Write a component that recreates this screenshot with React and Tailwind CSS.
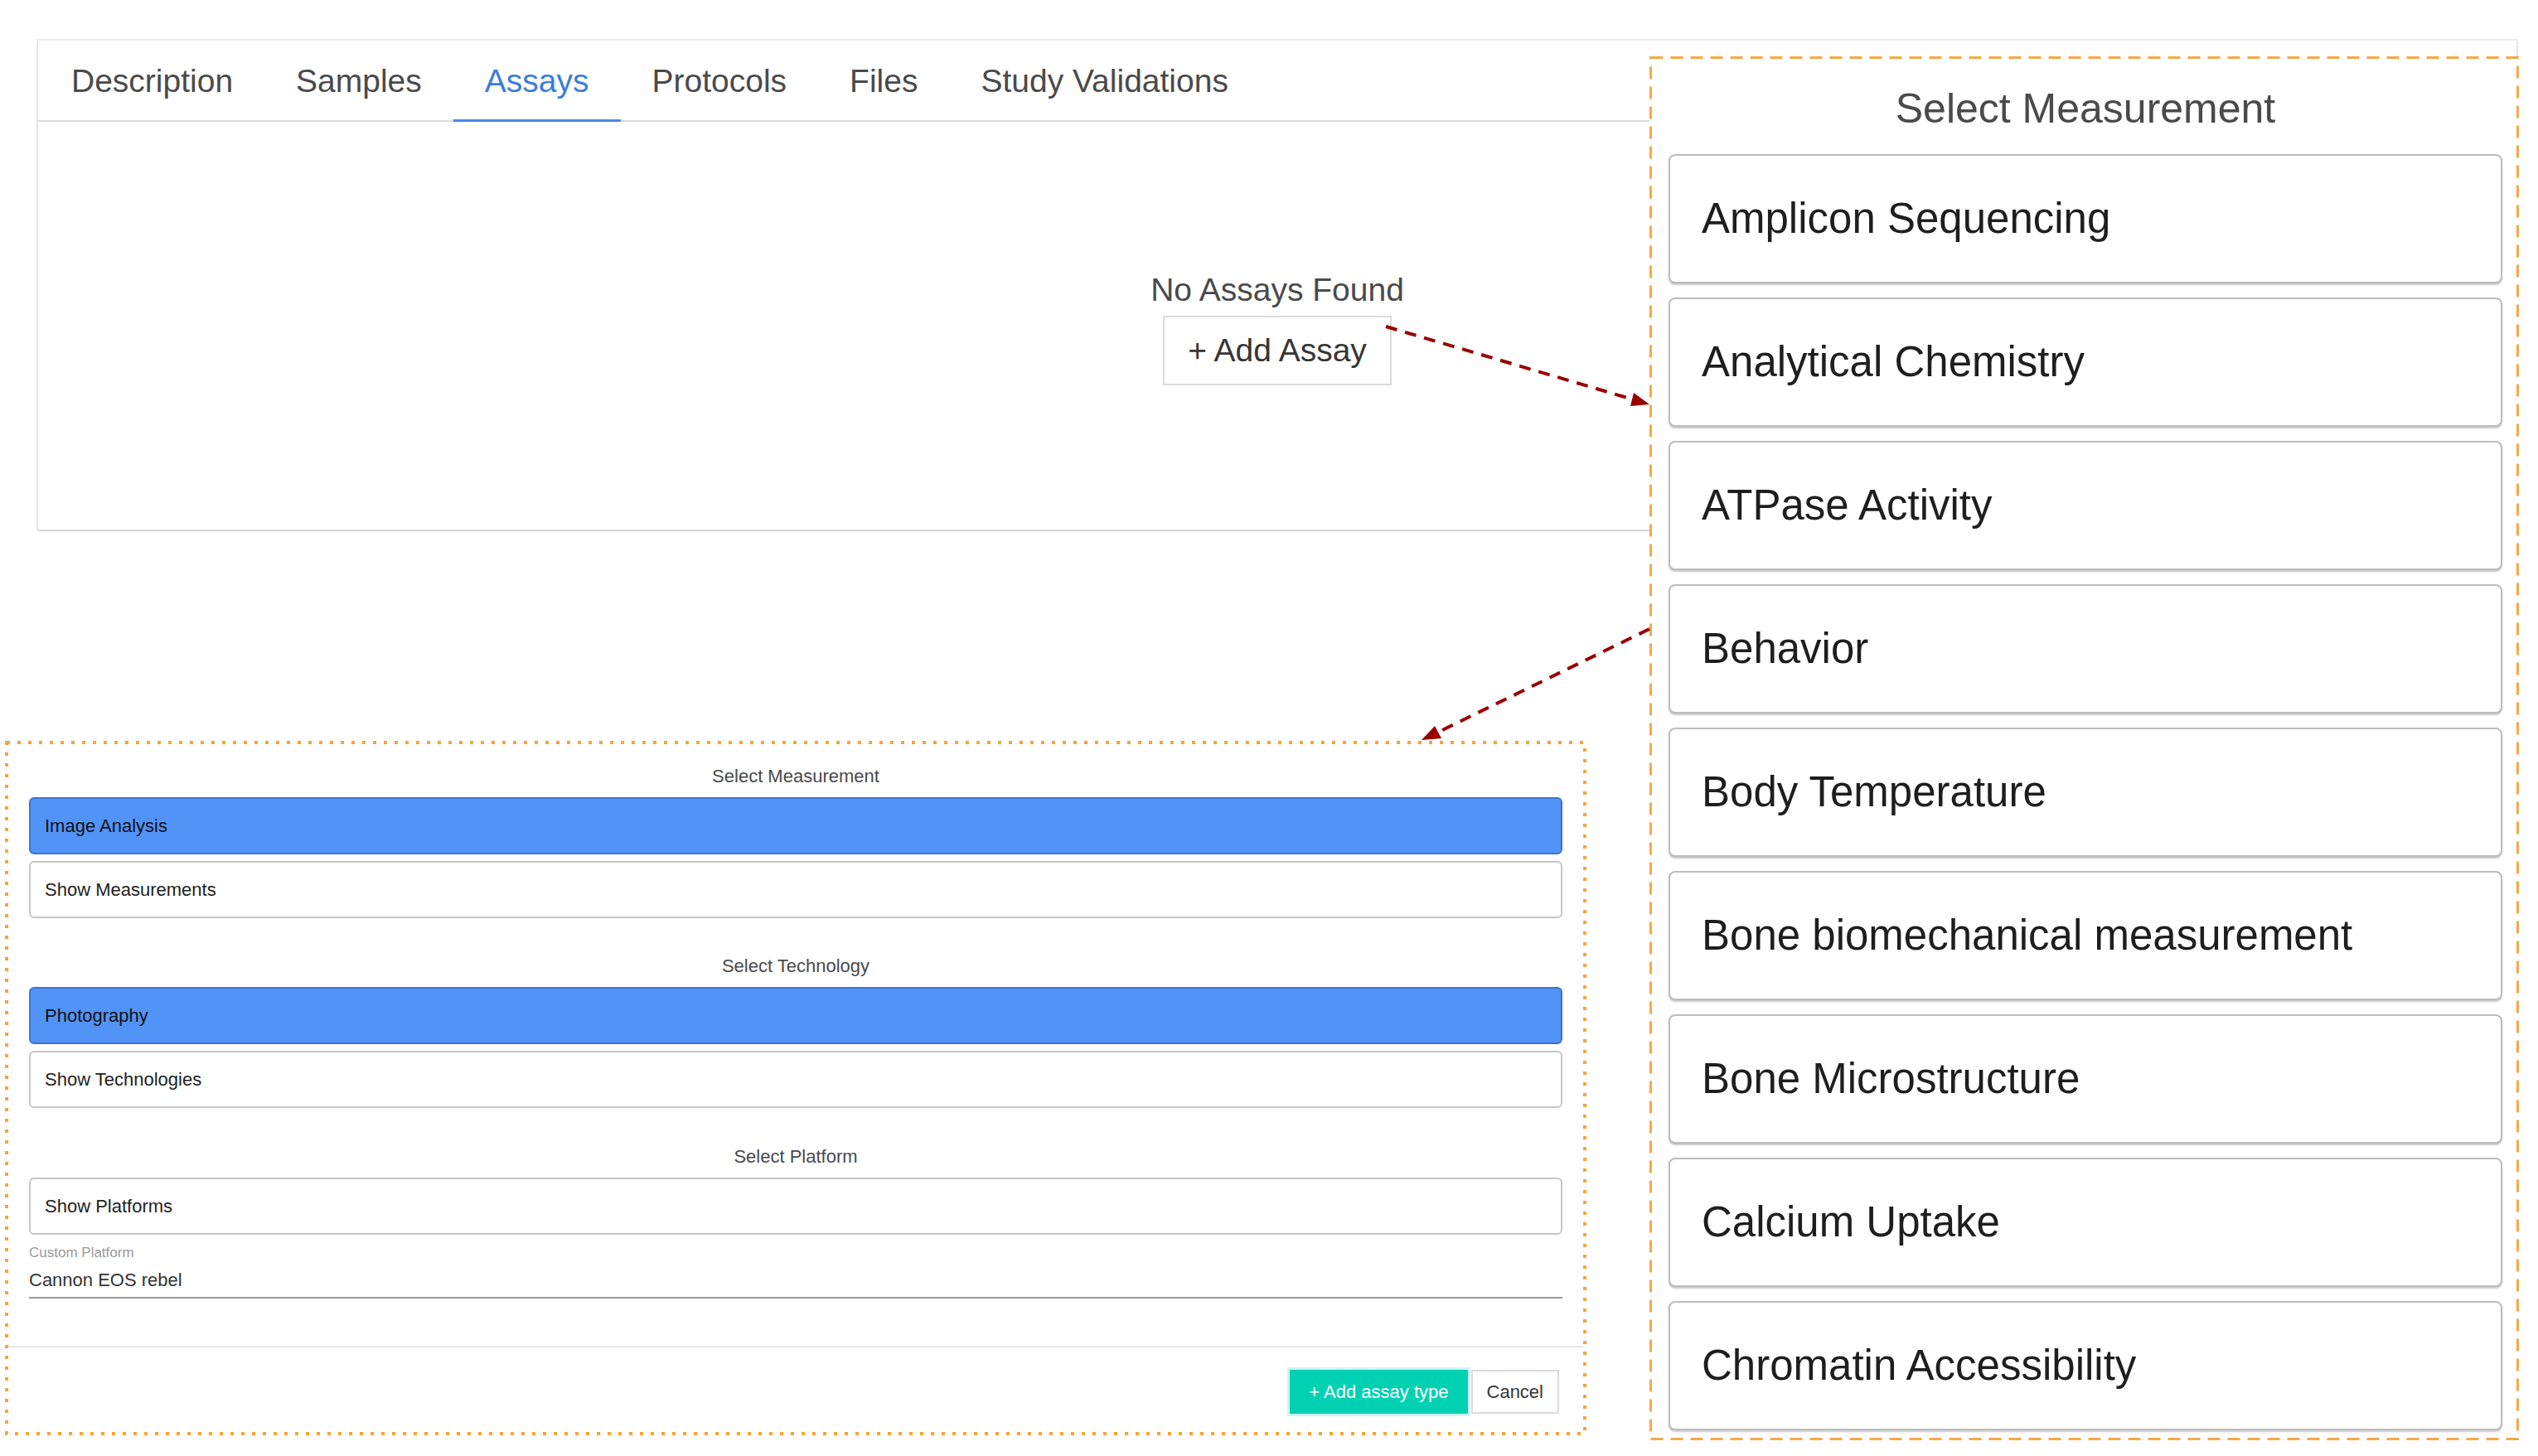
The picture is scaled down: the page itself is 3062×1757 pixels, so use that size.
import React from 'react';

const tabs = ['Description', 'Samples', 'Assays', 'Protocols', 'Files', 'Study Validations'];

const measurements = [
  'Amplicon Sequencing',
  'Analytical Chemistry',
  'ATPase Activity',
  'Behavior',
  'Body Temperature',
  'Bone biomechanical measurement',
  'Bone Microstructure',
  'Calcium Uptake',
  'Chromatin Accessibility',
];

// dashed / dotted annotation frame drawn over a panel
function Frame({ w, h, stroke, dash, color }) {
  return (
    <svg className="pointer-events-none absolute left-0 top-0" width={w} height={h}>
      <rect
        x={stroke / 2}
        y={stroke / 2}
        width={w - stroke}
        height={h - stroke}
        fill="none"
        stroke={color}
        strokeWidth={stroke}
        strokeDasharray={dash}
      />
    </svg>
  );
}

function FieldLabel({ children, className = '' }) {
  return (
    <div className={`text-center text-[22px] leading-[32px] text-[#4a4a4a] mb-[9px] ${className}`}>
      {children}
    </div>
  );
}

function SelectedBar({ children }) {
  return (
    <div className="h-[69px] flex items-center pl-[17px] rounded-[6px] border-2 border-[#3d74cc] bg-[#5193f7] text-[22px] text-[#111]">
      {children}
    </div>
  );
}

function ShowBox({ children, className = '' }) {
  return (
    <div className={`h-[69px] flex items-center pl-[17px] rounded-[6px] border-2 border-[#c6c6c6] bg-white text-[22px] text-[#222] ${className}`}>
      {children}
    </div>
  );
}

export default function App() {
  return (
    <div className="relative w-[3062px] h-[1757px] overflow-hidden bg-white font-['Liberation_Sans',Arial,sans-serif]">
      <div className="flex flex-col">
        {/* Study card with tabs */}
        <div className="ml-[46px] mt-[49px] w-[2990px] h-[590px] flex flex-col bg-white shadow-[0_2px_3px_rgba(10,10,10,0.12),0_0_0_2px_rgba(10,10,10,0.07)]">
          <ul className="flex h-[98px] pt-[3px] pl-[2px] border-b-2 border-[#dbdbdb]">
            {tabs.map((t) => (
              <li
                key={t}
                className={
                  t === 'Assays'
                    ? 'flex items-center px-[38px] text-[39px] text-[#3b7cdb] border-b-[3px] border-[#4a86e8] -mb-[2px]'
                    : 'flex items-center px-[38px] text-[39px] text-[#4a4a4a]'
                }
              >
                {t}
              </li>
            ))}
          </ul>
          <div className="flex-1 flex flex-col items-center justify-center pt-[5px]">
            <div className="text-[39px] leading-[48px] text-[#4a4a4a]">No Assays Found</div>
            <button className="mt-[7px] h-[84px] px-[28px] border-2 border-[#dbdbdb] bg-white text-[39px] text-[#363636]">
              + Add Assay
            </button>
          </div>
        </div>

        {/* Add assay form */}
        <div className="relative ml-[6px] mt-[255px] w-[1908px] h-[838px] flex flex-col">
          <Frame w={1908} h={838} stroke={4} dash="4 9" color="#f6a437" />
          <div className="px-[29px] pt-[27px]">
            <FieldLabel>Select Measurement</FieldLabel>
            <SelectedBar>Image Analysis</SelectedBar>
            <ShowBox className="mt-[8px]">Show Measurements</ShowBox>

            <FieldLabel className="mt-[42px]">Select Technology</FieldLabel>
            <SelectedBar>Photography</SelectedBar>
            <ShowBox className="mt-[8px]">Show Technologies</ShowBox>

            <FieldLabel className="mt-[43px]">Select Platform</FieldLabel>
            <ShowBox>Show Platforms</ShowBox>

            <div className="mt-[12px] text-[17px] leading-[20px] text-[#9a9a9a]">Custom Platform</div>
            <div className="mt-[8px] pb-[5px] border-b-2 border-[#9a9a9a] text-[22px] leading-[30px] text-[#333]">
              Cannon EOS rebel
            </div>
          </div>
          <div className="mt-auto mx-[4px] border-t-2 border-[#e4e4e4] pt-[27px] pb-[26px] pr-[29px] flex justify-end gap-[4px]">
            <button className="h-[53px] px-[23px] bg-[#00d1b2] text-white text-[22px] shadow-[0_0_0_3px_rgba(0,209,178,0.2)]">
              + Add assay type
            </button>
            <button className="h-[53px] px-[17px] border-2 border-[#dbdbdb] bg-white text-[#363636] text-[22px]">
              Cancel
            </button>
          </div>
        </div>
      </div>

      {/* Measurement list overlaid on the card */}
      <div className="absolute left-[1990px] top-[68px] w-[1049px] h-[1670px] bg-white pt-[33px] pl-[23px] pr-[20px]">
        <Frame w={1049} h={1670} stroke={3} dash="15 9" color="#f7a845" />
        <div className="text-center text-[50px] leading-[60px] text-[#4a4a4a] mb-[25px]">Select Measurement</div>
        <div className="flex flex-col gap-[17px]">
          {measurements.map((m) => (
            <div
              key={m}
              className="h-[156px] flex items-center pl-[38px] rounded-[8px] border-2 border-[#bdbdbd] bg-white text-[51px] text-[#1e1e1e] shadow-[0_2px_2px_rgba(0,0,0,0.22)]"
            >
              {m}
            </div>
          ))}
        </div>
      </div>

      {/* Annotation arrows */}
      <svg className="pointer-events-none absolute left-0 top-0" width="3062" height="1757">
        <line x1="1672" y1="394" x2="1970" y2="482" stroke="#990000" strokeWidth="4" strokeDasharray="14 10" />
        <polygon points="1990,488 1971,474 1967,490" fill="#990000" />
        <line x1="1990" y1="759" x2="1734" y2="884" stroke="#990000" strokeWidth="4" strokeDasharray="14 10" />
        <polygon points="1715,893 1731,876 1739,891" fill="#990000" />
      </svg>
    </div>
  );
}
